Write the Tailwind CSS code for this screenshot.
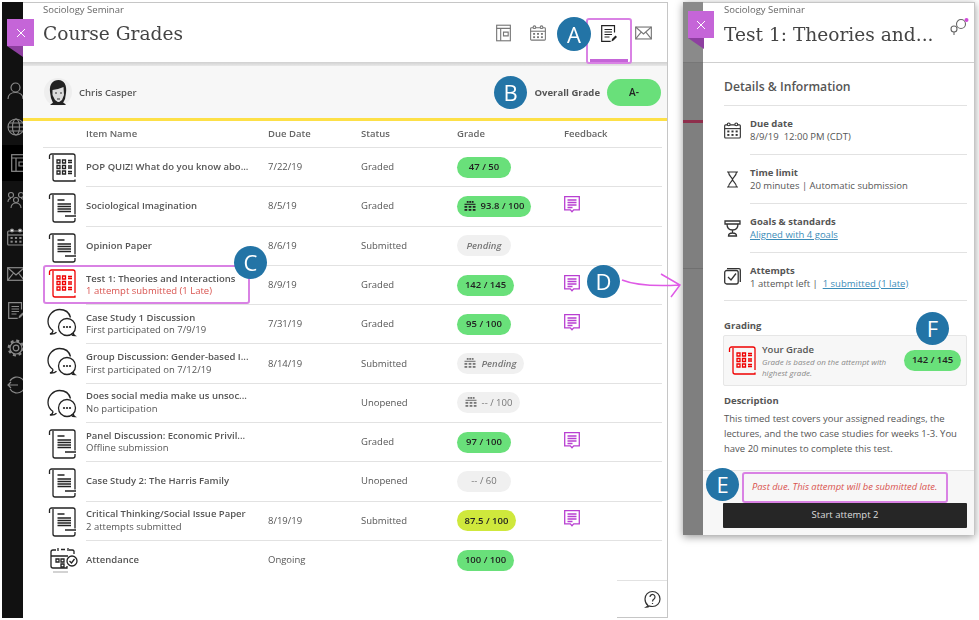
<!DOCTYPE html>
<html lang="en">
<head>
<meta charset="UTF-8">
<title>Course Grades</title>
<script src="https://cdn.jsdelivr.net/npm/@tailwindcss/browser@4"></script>
</head>
<body class="bg-white">
<svg class="hidden" xmlns="http://www.w3.org/2000/svg">
  <symbol id="doc" viewBox="0 0 30 30"><g fill="none" stroke="currentColor" stroke-width="1.3"><path d="M1.5 6V3a2 2 0 0 1 2-2h21.500a2 2 0 0 1 2 2v18.500M27 25v2a2 2 0 0 1-2 2H7a2 2 0 0 1-2-2V2"/><path d="M9.500 7h7M9.500 11h13.500M9.500 13.500h13.500M9.500 16h13.500M9.500 18.500h13.500M17 23h11"/></g></symbol>
  <symbol id="quiz" viewBox="0 0 30 30"><g fill="none" stroke="currentColor" stroke-width="1.300"><path d="M1.500 6V3a2 2 0 0 1 2-2h21.500a2 2 0 0 1 2 2v21M27 26.500v1.500H7a2 2 0 0 1-2-2V2"/><path d="M9 7h3v3H9zM14.500 7h3v3h-3zM9 12.500h3v3H9zM14.500 12.500h3v3h-3zM9 18h3v3H9zM14.500 18h3v3h-3zM20 7.500h4M20 9.500h4M20 13h4M20 15h4M20 18.500h4M20 20.500h4"/></g></symbol>
  <symbol id="chat" viewBox="0 0 30 30"><g fill="none" stroke="currentColor" stroke-width="1.300"><path d="M6 23.500C2.800 21.300 1 18 1 14.500 1 8 6.500 2.500 12.500 2.500c5.500 0 9.700 3 11 8M6 23.500c0 1.500-1.500 3-3 3.500 2.500.3 5-.3 6.500-1.800"/><circle cx="20" cy="20" r="8.500" fill="#fff"/><path d="M24 27c1 1.200 2.500 1.700 4 1.700-1-.7-1.600-1.700-1.700-3"/></g><g fill="currentColor"><circle cx="17" cy="20" r="1.100"/><circle cx="20" cy="20" r="1.100"/><circle cx="23" cy="20" r="1.100"/></g></symbol>
  <symbol id="note" viewBox="0 0 16 18"><g fill="none" stroke="currentColor" stroke-width="1.300"><path d="M.700.700h14.600v13.200H9.700L8 15.700l-1.700-1.800H.700z"/><path d="M3.500 4h9M3.500 6.500h9M3.500 9h9M3.500 11.500h5"/></g></symbol>
  <symbol id="cal" viewBox="0 0 18 18"><g fill="none" stroke="currentColor" stroke-width="1.200"><rect x=".700" y="3" width="16.600" height="14" rx="1"/><path d="M.700 7h16.600"/><circle cx="5" cy="2.500" r="1.500" fill="#fff"/><circle cx="13" cy="2.500" r="1.500" fill="#fff"/></g><g fill="currentColor"><rect x="3.500" y="9" width="2.200" height="2"/><rect x="7.900" y="9" width="2.200" height="2"/><rect x="12.300" y="9" width="2.200" height="2"/><rect x="3.500" y="12.700" width="2.200" height="2"/><rect x="7.900" y="12.700" width="2.200" height="2"/><rect x="12.300" y="12.700" width="2.200" height="2"/></g></symbol>
  <symbol id="book" viewBox="0 0 16 18"><g fill="none" stroke="currentColor" stroke-width="1.200"><rect x=".700" y=".700" width="14.600" height="16.600"/><path d="M.700 4h14.600M5 4v13.300M8 8h5v4H8z"/></g></symbol>
  <symbol id="mail" viewBox="0 0 18 14"><g fill="none" stroke="currentColor" stroke-width="1.200"><rect x=".700" y=".700" width="16.600" height="12.600"/><path d="M.700.700 9 8l8.300-7.300M.700 13.300 6.500 6M17.300 13.300 11.500 6"/></g></symbol>
  <symbol id="edit" viewBox="0 0 16 17"><g fill="none" stroke="currentColor" stroke-width="1.200"><path d="M13.500 7.500V.700H.700v15.600h9"/><path d="M3.500 4.500h7.500M3.500 7h7.500M3.500 9.500h7.500M3.500 12h5"/></g><path d="M10.500 16.500l.5-2.500 3.500-3.500 1.500 1.500-3.500 3.500z" fill="currentColor"/></symbol>
  <symbol id="grid" viewBox="0 0 12 12"><g fill="currentColor"><rect x="2.500" y="0" width="2" height="2"/><rect x="5.200" y="0" width="2" height="2"/><rect x="7.900" y="0" width="2" height="2"/><rect x="0" y="3" width="12" height="1.200"/><rect x="0" y="5.400" width="3" height="2"/><rect x="4.500" y="5.400" width="3" height="2"/><rect x="9" y="5.400" width="3" height="2"/><rect x="0" y="8.700" width="3" height="2"/><rect x="4.500" y="8.700" width="3" height="2"/><rect x="9" y="8.700" width="3" height="2"/></g></symbol>
</svg>

<div class="relative w-[979px] h-[620px] overflow-hidden flex items-start pt-[2px] pl-[2px] gap-[15px] font-['Open_Sans',sans-serif] text-[#555] blur-[0.3px]">

  <!-- course grades panel -->
  <div class="flex w-[666px] h-[616px] shrink-0">
    <div class="w-[21px] h-full shrink-0 bg-[#111] overflow-hidden flex flex-col items-start pt-[70px] text-[#8a8a8a]">
      <div class="h-[37px] w-full pl-[5px] flex items-center"><svg class="w-[17px] h-[18px] shrink-0" viewBox="0 0 17 18" fill="none" stroke="currentColor" stroke-width="1.200"><circle cx="8.500" cy="5.500" r="4.500"/><path d="M1 17c0-4 3-6.500 7.500-6.500S16 13 16 17"/></svg></div>
      <div class="h-[36px] w-full pl-[5px] flex items-center"><svg class="w-[18px] h-[18px] shrink-0" viewBox="0 0 18 18" fill="none" stroke="currentColor" stroke-width="1.100"><circle cx="9" cy="9" r="8"/><ellipse cx="9" cy="9" rx="3.500" ry="8"/><path d="M1 9h16M2.500 5h13M2.500 13h13"/></svg></div>
      <div class="h-[36px] w-full pl-[9px] flex items-center bg-black"><svg class="w-[16px] h-[18px] shrink-0"><use href="#book"/></svg></div>
      <div class="h-[37px] w-full pl-[5px] flex items-center"><svg class="w-[18px] h-[18px] shrink-0" viewBox="0 0 18 18" fill="none" stroke="currentColor" stroke-width="1.100"><circle cx="4" cy="4" r="2.500"/><circle cx="14" cy="4" r="2.500"/><circle cx="9" cy="9" r="2.500"/><path d="M1 11c0-2 1-3.500 3-3.500M17 11c0-2-1-3.500-3-3.500M4 17c0-3 2-5 5-5s5 2 5 5"/></svg></div>
      <div class="h-[37px] w-full pl-[5px] flex items-center"><svg class="w-[18px] h-[18px] shrink-0"><use href="#cal"/></svg></div>
      <div class="h-[37px] w-full pl-[5px] flex items-center"><svg class="w-[18px] h-[14px] shrink-0"><use href="#mail"/></svg></div>
      <div class="h-[37px] w-full pl-[6px] flex items-center"><svg class="w-[16px] h-[17px] shrink-0"><use href="#edit"/></svg></div>
      <div class="h-[37px] w-full pl-[5px] flex items-center"><svg class="w-[18px] h-[18px] shrink-0" viewBox="0 0 18 18" fill="none" stroke="currentColor"><circle cx="9" cy="9" r="2.800" stroke-width="1.200"/><circle cx="9" cy="9" r="6" stroke-width="1.200"/><circle cx="9" cy="9" r="7.300" stroke-width="2.200" stroke-dasharray="3 2.730"/></svg></div>
      <div class="h-[37px] w-full pl-[5px] flex items-center"><svg class="w-[18px] h-[18px] shrink-0" viewBox="0 0 18 18" fill="none" stroke="currentColor" stroke-width="1.200"><path d="M3 5a8 8 0 1 1 0 8M1 9h10M4 6 1 9l3 3"/></svg></div>
    </div>

    <div class="flex-1 min-w-0 h-full flex flex-col border-r border-t border-[#c6c6c6]">
      <!-- header -->
      <div class="h-[59px] shrink-0 flex items-start pl-[20px] relative">
        <div>
          <p class="text-[9.500px] leading-[14px] text-[#666]">Sociology Seminar</p>
          <h1 class="font-['DejaVu_Serif',serif] text-[18.600px] leading-[30px] text-[#444] mt-[2px]">Course Grades</h1>
        </div>
        <div class="ml-auto flex items-center pt-[21px] pr-[15px] text-[#777]">
          <svg class="w-[15px] h-[18px]"><use href="#book"/></svg>
          <svg class="w-[16px] h-[16px] ml-[19px]"><use href="#cal"/></svg>
          <svg class="w-[16px] h-[17px] ml-[55px] text-[#222]"><use href="#edit"/></svg>
          <svg class="w-[17px] h-[14px] ml-[18px]"><use href="#mail"/></svg>
        </div>
      </div>
      <div class="h-[4px] shrink-0 bg-gradient-to-b from-[#d0d0d0] to-[#e8e8e8]"></div>
      <!-- student bar -->
      <div class="h-[52px] shrink-0 bg-[#f7f7f7] border-b-[3px] border-[#fde047] box-content flex items-center pl-[21px] pr-[6px]">
        <svg class="w-[28px] h-[28px]" viewBox="0 0 28 28"><circle cx="14" cy="14" r="14" fill="#eee"/><path d="M6 14C5 6 9 2 14.500 2 20 2 23 7 22 15l-1 6-2 4H9l-2-5z" fill="#222"/><path d="M8.500 12c3.500-.5 7.500-1.500 11-3l.5 8-2 5-3.500 2.500-3.500-2.500-2.500-5z" fill="#ddd"/><path d="M11 15h2M16 15h2M13 21h3" stroke="#333"/><path d="M6 27c2-2 4-3 6-3h4c2 0 5 1 6 3z" fill="#222"/></svg>
        <p class="ml-[7px] mt-[3px] text-[9.500px] font-semibold text-[#555]">Chris Casper</p>
        <p class="ml-auto mt-[2px] text-[9.500px] font-bold text-[#555]">Overall Grade</p>
        <span class="ml-[7px] w-[54px] h-[27px] rounded-full bg-[#69e07a] flex items-center justify-center text-[10px] font-semibold text-[#222]">A-</span>
      </div>
      <!-- table -->
      <div class="pl-[20px] pr-[5px]">
        <div class="h-[27px] pl-[43px] border-b border-[#e2e2e2] grid grid-cols-[182px_93px_96px_107px_1fr] items-center text-[9.500px] font-semibold text-[#666]">
          <span>Item Name</span><span>Due Date</span><span>Status</span><span>Grade</span><span>Feedback</span>
        </div>

        <div class="flex h-[39.300px]">
          <div class="w-[43px] shrink-0 pl-[5px] pt-[5px] text-[#222]"><svg class="w-[30px] h-[30px]"><use href="#quiz"/></svg></div>
          <div class="flex-1 border-b border-[#e2e2e2] grid grid-cols-[182px_93px_96px_107px_1fr] items-center text-[9.500px]">
            <p class="font-semibold truncate">POP QUIZ! What do you know abo...</p><span>7/22/19</span><span>Graded</span>
            <span class="w-[54px] h-[21px] rounded-full bg-[#69e07a] text-[#222] font-semibold flex items-center justify-center">47 / 50</span>
          </div>
        </div>

        <div class="flex h-[39.300px]">
          <div class="w-[43px] shrink-0 pl-[5px] pt-[6px] text-[#222]"><svg class="w-[30px] h-[30px]"><use href="#doc"/></svg></div>
          <div class="flex-1 border-b border-[#e2e2e2] grid grid-cols-[182px_93px_96px_107px_1fr] items-center text-[9.500px]">
            <p class="font-semibold truncate">Sociological Imagination</p><span>8/5/19</span><span>Graded</span>
            <span class="w-[74px] h-[21px] rounded-full bg-[#69e07a] text-[#222] font-semibold flex items-center justify-center gap-[5px]"><svg class="w-[12px] h-[11px]"><use href="#grid"/></svg>93.8 / 100</span>
            <svg class="w-[16px] h-[18px] -mt-[3px] text-[#b83fd1]"><use href="#note"/></svg>
          </div>
        </div>

        <div class="flex h-[39.300px]">
          <div class="w-[43px] shrink-0 pl-[5px] pt-[6px] text-[#222]"><svg class="w-[30px] h-[30px]"><use href="#doc"/></svg></div>
          <div class="flex-1 border-b border-[#e2e2e2] grid grid-cols-[182px_93px_96px_107px_1fr] items-center text-[9.500px]">
            <p class="font-semibold truncate">Opinion Paper</p><span>8/6/19</span><span>Submitted</span>
            <span class="w-[54px] h-[21px] rounded-full bg-[#f0f0f0] text-[#777] italic font-semibold flex items-center justify-center">Pending</span>
          </div>
        </div>

        <div class="flex h-[39.300px]">
          <div class="w-[43px] shrink-0 pl-[5px] pt-[3px] text-[#f00000]"><svg class="w-[30px] h-[30px]"><use href="#quiz"/></svg></div>
          <div class="flex-1 border-b border-[#e2e2e2] grid grid-cols-[182px_93px_96px_107px_1fr] items-center text-[9.500px]">
            <div class="leading-[12.500px]"><p class="font-semibold truncate">Test 1: Theories and Interactions</p><p class="text-[#d9534f]">1 attempt submitted (1 Late)</p></div><span>8/9/19</span><span>Graded</span>
            <span class="w-[57px] h-[21px] rounded-full bg-[#69e07a] text-[#222] font-semibold flex items-center justify-center">142 / 145</span>
            <svg class="w-[16px] h-[18px] -mt-[3px] text-[#b83fd1]"><use href="#note"/></svg>
          </div>
        </div>

        <div class="flex h-[39.300px]">
          <div class="w-[43px] shrink-0 pl-[4px] pt-[2px] text-[#222]"><svg class="w-[30px] h-[30px]"><use href="#chat"/></svg></div>
          <div class="flex-1 border-b border-[#e2e2e2] grid grid-cols-[182px_93px_96px_107px_1fr] items-center text-[9.500px]">
            <div class="leading-[12.500px]"><p class="font-semibold truncate">Case Study 1 Discussion</p><p>First participated on 7/9/19</p></div><span>7/31/19</span><span>Graded</span>
            <span class="w-[54px] h-[21px] rounded-full bg-[#69e07a] text-[#222] font-semibold flex items-center justify-center">95 / 100</span>
            <svg class="w-[16px] h-[18px] -mt-[3px] text-[#b83fd1]"><use href="#note"/></svg>
          </div>
        </div>

        <div class="flex h-[39.300px]">
          <div class="w-[43px] shrink-0 pl-[4px] pt-[2px] text-[#222]"><svg class="w-[30px] h-[30px]"><use href="#chat"/></svg></div>
          <div class="flex-1 border-b border-[#e2e2e2] grid grid-cols-[182px_93px_96px_107px_1fr] items-center text-[9.500px]">
            <div class="leading-[12.500px]"><p class="font-semibold truncate">Group Discussion: Gender-based I...</p><p>First participated on 7/12/19</p></div><span>8/14/19</span><span>Submitted</span>
            <span class="w-[67px] h-[21px] rounded-full bg-[#f0f0f0] text-[#777] italic font-semibold flex items-center justify-center gap-[5px]"><svg class="w-[12px] h-[11px]"><use href="#grid"/></svg>Pending</span>
          </div>
        </div>

        <div class="flex h-[39.300px]">
          <div class="w-[43px] shrink-0 pl-[4px] pt-[4px] text-[#222]"><svg class="w-[30px] h-[30px]"><use href="#chat"/></svg></div>
          <div class="flex-1 border-b border-[#e2e2e2] grid grid-cols-[182px_93px_96px_107px_1fr] items-center text-[9.500px]">
            <div class="leading-[12.500px]"><p class="font-semibold truncate">Does social media make us unsoc...</p><p>No participation</p></div><span></span><span>Unopened</span>
            <span class="w-[63px] h-[21px] rounded-full bg-[#f0f0f0] text-[#777] flex items-center justify-center gap-[5px]"><svg class="w-[12px] h-[11px]"><use href="#grid"/></svg>-- / 100</span>
          </div>
        </div>

        <div class="flex h-[39.300px]">
          <div class="w-[43px] shrink-0 pl-[5px] pt-[6px] text-[#222]"><svg class="w-[30px] h-[30px]"><use href="#doc"/></svg></div>
          <div class="flex-1 border-b border-[#e2e2e2] grid grid-cols-[182px_93px_96px_107px_1fr] items-center text-[9.500px]">
            <div class="leading-[12.500px]"><p class="font-semibold truncate">Panel Discussion: Economic Privil...</p><p>Offline submission</p></div><span></span><span>Graded</span>
            <span class="w-[54px] h-[21px] rounded-full bg-[#69e07a] text-[#222] font-semibold flex items-center justify-center">97 / 100</span>
            <svg class="w-[16px] h-[18px] -mt-[3px] text-[#b83fd1]"><use href="#note"/></svg>
          </div>
        </div>

        <div class="flex h-[39.300px]">
          <div class="w-[43px] shrink-0 pl-[5px] pt-[6px] text-[#222]"><svg class="w-[30px] h-[30px]"><use href="#doc"/></svg></div>
          <div class="flex-1 border-b border-[#e2e2e2] grid grid-cols-[182px_93px_96px_107px_1fr] items-center text-[9.500px]">
            <p class="font-semibold truncate">Case Study 2: The Harris Family</p><span></span><span>Unopened</span>
            <span class="w-[54px] h-[21px] rounded-full bg-[#f0f0f0] text-[#777] flex items-center justify-center">-- / 60</span>
          </div>
        </div>

        <div class="flex h-[39.300px]">
          <div class="w-[43px] shrink-0 pl-[5px] pt-[5px] text-[#222]"><svg class="w-[30px] h-[30px]"><use href="#doc"/></svg></div>
          <div class="flex-1 border-b border-[#e2e2e2] grid grid-cols-[182px_93px_96px_107px_1fr] items-center text-[9.500px]">
            <div class="leading-[12.500px]"><p class="font-semibold truncate">Critical Thinking/Social Issue Paper</p><p>2 attempts submitted</p></div><span>8/19/19</span><span>Submitted</span>
            <span class="w-[59px] h-[21px] rounded-full bg-[#cfe83c] text-[#222] font-semibold flex items-center justify-center">87.5 / 100</span>
            <svg class="w-[16px] h-[18px] -mt-[3px] text-[#b83fd1]"><use href="#note"/></svg>
          </div>
        </div>

        <div class="flex h-[39.300px]">
          <div class="w-[43px] shrink-0 pl-[4px] pt-[3px] text-[#222]"><svg class="w-[31px] h-[31px]" viewBox="0 0 31 31" fill="none" stroke="currentColor" stroke-width="1.300"><path d="M22 6h3a2 2 0 0 1 2 1v3M20 22v2H6a2 2 0 0 1-2-2V8a2 2 0 0 1 2-2h3"/><path d="M4 12h17M11 4v3M14 5.500h4M21 4v3M9 15h3v3H9zM14 15h3v3h-3zM14 20h3v3h-3z"/><circle cx="25" cy="17" r="5" fill="#fff"/><path d="m22.500 17 2 2 3-4"/><path d="M6 28h15" stroke="#bbb"/></svg></div>
          <div class="flex-1 grid grid-cols-[182px_93px_96px_107px_1fr] items-center text-[9.500px]">
            <p class="font-semibold truncate">Attendance</p><span>Ongoing</span><span></span>
            <span class="w-[57px] h-[21px] rounded-full bg-[#69e07a] text-[#222] font-semibold flex items-center justify-center">100 / 100</span>
          </div>
        </div>
      </div>
      <!-- help -->
      <div class="mt-auto ml-auto w-[50px] h-[37px] border-t border-[#e2e2e2] flex items-center justify-end pr-[6px]">
        <svg class="w-[17px] h-[18px] text-[#333]" viewBox="0 0 17 18" fill="none" stroke="currentColor" stroke-width="1.200"><path d="M4 15.500C2 14 1 12 1 9a7.500 7.500 0 1 1 7.500 7.500c-1 0-2 0-3-.5-.7.700-2 1.200-3.500 1.200.8-.5 1.500-1 2-1.700z"/><path d="M6 7a2.500 2.500 0 1 1 4 2c-1 .7-1.500 1.200-1.500 2.500M8.500 13v1"/></svg>
      </div>
      <div class="h-0 border-b border-[#c6c6c6] ml-auto w-[50px]"></div>
    </div>
  </div>

  <!-- test details panel -->
  <div class="flex w-[292px] h-[533px] shrink-0 shadow-[0_2px_8px_rgba(0,0,0,0.4)]">
    <div class="w-[20px] h-full shrink-0 bg-[#7f7f7f] flex flex-col">
      <div class="h-[60px] bg-[#8a8a8a]"></div>
      <div class="h-[58px] border-t border-[#777]"></div>
      <div class="h-[3px] bg-[#8e2f4c]"></div>
      <div class="h-[146px] border-b border-[#707070]"></div>
    </div>
    <div class="flex-1 min-w-0 bg-white border-t border-r border-[#c6c6c6] flex flex-col">
      <div class="h-[60px] shrink-0 border-b border-[#cfcfcf] pl-[21px] pr-[6px] relative">
        <p class="text-[9.500px] leading-[14px] text-[#666]">Sociology Seminar</p>
        <h2 class="font-['DejaVu_Serif',serif] text-[18.600px] leading-[30px] text-[#444] mt-[3px]">Test 1: Theories and...</h2>
        <svg class="absolute right-[5px] top-[14px] w-[19px] h-[19px] text-[#666]" viewBox="0 0 19 19" fill="none" stroke="currentColor" stroke-width="1.100"><circle cx="4" cy="12" r="3"/><path d="M4 15v3"/><circle cx="11" cy="7" r="4.500"/><circle cx="16.500" cy="3" r="2" fill="#d04bd8" stroke="none"/></svg>
      </div>
      <div class="pl-[21px] pr-[7px] flex-1 min-h-0">
        <h3 class="h-[43px] pt-[15px] text-[12.200px] leading-[18px] font-semibold text-[#555] border-b border-[#e2e2e2]">Details &amp; Information</h3>

        <div class="flex h-[49px] items-center text-[9.500px] leading-[13px]">
          <svg class="w-[17px] h-[17px] mr-[9px] shrink-0 text-[#333]"><use href="#cal"/></svg>
          <div class="flex-1 h-full border-b border-[#e2e2e2] flex flex-col justify-center"><p class="font-bold">Due date</p><p>8/9/19&nbsp; 12:00 PM (CDT)</p></div>
        </div>
        <div class="flex h-[49px] items-center text-[9.500px] leading-[13px]">
          <svg class="w-[17px] h-[17px] mr-[9px] shrink-0 text-[#333]" viewBox="0 0 17 17" fill="none" stroke="currentColor" stroke-width="1.200"><path d="M3 1h11M3 16h11M4.500 1c0 4 4 5.500 4 7.500S4.500 12 4.500 16M12.500 1c0 4-4 5.500-4 7.500s4 3.500 4 7.500"/></svg>
          <div class="flex-1 h-full border-b border-[#e2e2e2] flex flex-col justify-center"><p class="font-bold">Time limit</p><p>20 minutes | Automatic submission</p></div>
        </div>
        <div class="flex h-[49px] items-center text-[9.500px] leading-[13px]">
          <svg class="w-[17px] h-[17px] mr-[9px] shrink-0 text-[#333]" viewBox="0 0 17 17" fill="none" stroke="currentColor" stroke-width="1.300"><path d="M1 1h15v3H1zM3 4c0 4 2 6 5.500 6S14 8 14 4M8.500 10v3M4.500 16c0-2 1.500-3 4-3s4 1 4 3z"/></svg>
          <div class="flex-1 h-full border-b border-[#e2e2e2] flex flex-col justify-center"><p class="font-bold">Goals &amp; standards</p><p class="text-[#3b8cb8] underline">Aligned with 4 goals</p></div>
        </div>
        <div class="flex h-[48px] items-center text-[9.500px] leading-[13px] border-b border-[#e2e2e2]">
          <svg class="w-[17px] h-[17px] mr-[9px] shrink-0 text-[#333]" viewBox="0 0 17 17" fill="none" stroke="currentColor" stroke-width="1.300"><rect x=".700" y="2.500" width="13.500" height="13.500" rx="2"/><path d="M3 .700h12a1.300 1.300 0 0 1 1.300 1.300v12M4 9l3 3 5-6.500"/></svg>
          <div class="flex-1"><p class="font-bold">Attempts</p><p>1 attempt left |&nbsp; <span class="text-[#3b8cb8] underline">1 submitted (1 late)</span></p></div>
        </div>

        <h4 class="mt-[18px] text-[9.500px] leading-[14px] font-bold">Grading</h4>
        <div class="mt-[2px] -ml-[1px] h-[51px] bg-[#f7f7f7] border border-[#e6e6e6] rounded-[2px] flex items-center pl-[4px] pr-[5px]">
          <svg class="w-[30px] h-[30px] shrink-0 text-[#f00000]"><use href="#quiz"/></svg>
          <div class="ml-[4px] flex-1 min-w-0">
            <p class="text-[9.500px] leading-[13px] font-semibold">Your Grade</p>
            <p class="text-[8px] leading-[11px] italic text-[#888]">Grade is based on the attempt with<br>highest grade.</p>
          </div>
          <span class="w-[57px] h-[21px] rounded-full bg-[#69e07a] text-[#222] text-[9.500px] font-semibold flex items-center justify-center shrink-0">142 / 145</span>
        </div>

        <h4 class="mt-[8px] text-[9.500px] leading-[14px] font-bold">Description</h4>
        <p class="mt-[3px] text-[9.500px] leading-[15px]">This timed test covers your assigned readings, the lectures, and the two case studies for weeks 1-3. You have 20 minutes to complete this test.</p>
      </div>
      <div class="h-[65px] shrink-0 bg-[#f7f7f7] border-t border-[#e6e6e6] pl-[20px] pr-[7px] flex flex-col">
        <p class="h-[32px] pl-[29px] flex items-center text-[9.400px] italic text-[#d9534f]">Past due. This attempt will be submitted late.</p>
        <div class="h-[25px] bg-[#262626] rounded-[1px] flex items-center justify-center text-[9.500px] text-[#ddd]">Start attempt 2</div>
      </div>
    </div>
  </div>

  <!-- close buttons -->
  <div class="absolute left-[7px] top-[19px] w-[27px] h-[27px] bg-[#c565d8] flex items-center justify-center"><svg class="w-[10px] h-[10px]" viewBox="0 0 10 10" stroke="#fff" stroke-width="1"><path d="M1 1l8 8M9 1l-8 8"/></svg></div>
  <div class="absolute left-[7px] top-[46px] w-[16px] h-[11px] bg-[#8e3fa0] [clip-path:polygon(0_0,100%_0,100%_100%)]"></div>
  <div class="absolute left-[688px] top-[11px] w-[26px] h-[27px] bg-[#c565d8] flex items-center justify-center"><svg class="w-[10px] h-[10px]" viewBox="0 0 10 10" stroke="#fff" stroke-width="1"><path d="M1 1l8 8M9 1l-8 8"/></svg></div>
  <div class="absolute left-[688px] top-[38px] w-[16px] h-[11px] bg-[#8e3fa0] [clip-path:polygon(0_0,100%_0,100%_100%)]"></div>

  <!-- annotations -->
  <div class="absolute left-[586px] top-[18px] w-[46px] h-[46px] border-2 border-[#d982e4] rounded-[3px] flex items-end px-[2px]"><div class="w-full h-[3px] bg-[#c565d8]"></div></div>
  <div class="absolute left-[43px] top-[265px] w-[207px] h-[39px] border-2 border-[#d982e4] rounded-[3px]"></div>
  <div class="absolute left-[742px] top-[472px] w-[206px] h-[31px] border-2 border-[#d982e4] rounded-[3px]"></div>
  <div class="absolute left-[557px] top-[17px] w-[34px] h-[34px] rounded-full bg-[#2374a6] text-white text-[22px] flex items-center justify-center">A</div>
  <div class="absolute left-[494px] top-[76px] w-[33px] h-[33px] rounded-full bg-[#2374a6] text-white text-[22px] flex items-center justify-center">B</div>
  <div class="absolute left-[234px] top-[246px] w-[33px] h-[33px] rounded-full bg-[#2374a6] text-white text-[22px] flex items-center justify-center">C</div>
  <div class="absolute left-[587px] top-[265px] w-[33px] h-[33px] rounded-full bg-[#2374a6] text-white text-[22px] flex items-center justify-center">D</div>
  <div class="absolute left-[706px] top-[468px] w-[33px] h-[33px] rounded-full bg-[#2374a6] text-white text-[22px] flex items-center justify-center">E</div>
  <div class="absolute left-[916px] top-[312px] w-[33px] h-[33px] rounded-full bg-[#2374a6] text-white text-[22px] flex items-center justify-center">F</div>
  <svg class="absolute left-[620px] top-[270px] w-[64px] h-[30px]" viewBox="0 0 64 30" fill="none" stroke="#df5ae6" stroke-width="1.500"><path d="M2 10c15 6 40 6 58 5M41 4l19 11-9 12"/></svg>
</div>
</body>
</html>
